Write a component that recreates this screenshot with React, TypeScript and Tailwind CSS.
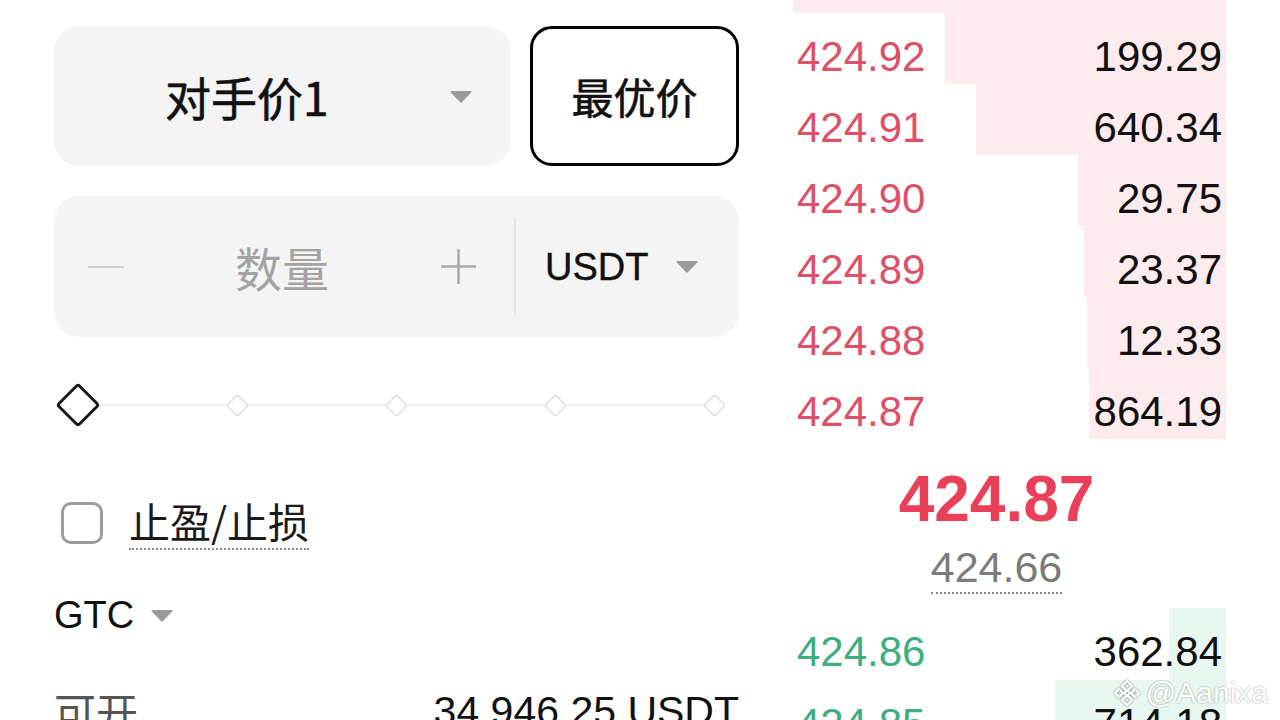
import React from "react";

const latin = "font-['Liberation_Sans','Noto_Sans_CJK_SC',sans-serif]";
const cjk = "font-['Noto_Sans_CJK_SC','Liberation_Sans',sans-serif]";

const asks = [
  { price: "424.93", qty: "518.40", bar: 433 },
  { price: "424.92", qty: "199.29", bar: 281 },
  { price: "424.91", qty: "640.34", bar: 250 },
  { price: "424.90", qty: "29.75", bar: 148 },
  { price: "424.89", qty: "23.37", bar: 142 },
  { price: "424.88", qty: "12.33", bar: 139 },
  { price: "424.87", qty: "864.19", bar: 137 },
];

const bids = [
  { price: "424.86", qty: "362.84", bar: 57 },
  { price: "424.85", qty: "714.18", bar: 171 },
];

const Caret = ({ className = "" }: { className?: string }) => (
  <svg width="22" height="13" viewBox="0 0 22 13" className={`shrink-0 ${className}`}>
    <path d="M1.5 1h19a1 1 0 0 1 .8 1.6l-9.5 9.6a1 1 0 0 1-1.6 0L.7 2.6A1 1 0 0 1 1.5 1z" fill="#9a9a9a" />
  </svg>
);

const BookRow = ({
  price,
  qty,
  bar,
  side,
  h,
}: {
  price: string;
  qty: string;
  bar: number;
  side: "ask" | "bid";
  h: string;
}) => (
  <div className={`relative flex shrink-0 ${h} items-center justify-between px-[4px] pt-[16px]`}>
    <div
      className={`absolute inset-y-0 right-0 ${side === "ask" ? "bg-[#fdebee]" : "bg-[#e9f7f1]"}`}
      style={{ width: bar }}
    />
    <span
      className={`relative text-[42px] leading-[42px] ${side === "ask" ? "text-[#dc5068]" : "text-[#3eae7e]"}`}
    >
      {price}
    </span>
    <span className="relative text-[42px] leading-[42px] text-[#111]">{qty}</span>
  </div>
);

export default function App() {
  return (
    <div className={`relative flex h-[720px] w-[1280px] items-start overflow-hidden bg-white ${latin}`}>
      {/* order form */}
      <div className="flex w-[739px] shrink-0 flex-col pl-[54px] pt-[26px]">
        <div className="flex h-[140px] shrink-0 gap-[19px]">
          <div className="flex w-[457px] items-center rounded-[25px] bg-[#f4f4f4]">
            <span
              className={`pl-[111px] text-[46px] font-normal leading-[46px] text-[#111] [-webkit-text-stroke:0.6px_#111] ${cjk}`}
            >
              对手价1
            </span>
            <Caret className="ml-auto mr-[39px]" />
          </div>
          <div className="flex flex-1 items-center justify-center rounded-[22px] border-[3px] border-black">
            <span className={`text-[42px] font-normal leading-[42px] text-[#111] [-webkit-text-stroke:0.6px_#111] ${cjk}`}>
              最优价
            </span>
          </div>
        </div>

        <div className="mt-[30px] flex h-[141px] shrink-0 items-center rounded-[25px] bg-[#f4f4f4]">
          <div className="ml-[34px] h-[2px] w-[36px] shrink-0 bg-[#d2d2d2]" />
          <span className={`w-[316px] shrink-0 text-center text-[47px] leading-[48px] text-[#a3a3a3] ${cjk}`}>
            数量
          </span>
          <svg width="37" height="37" viewBox="0 0 37 37" className="shrink-0">
            <path d="M18.5 1v35M1 18.5h35" stroke="#a8a8a8" strokeWidth="2.5" />
          </svg>
          <div className="ml-[37px] h-[98px] w-[2px] shrink-0 bg-[#e7e7e7]" />
          <span className="ml-[29px] text-[38px] leading-[38px] text-[#111] [-webkit-text-stroke:0.4px_#111]">USDT</span>
          <Caret className="ml-[28px]" />
        </div>

        <div className="relative mt-[45px] flex h-[46px] w-[684px] shrink-0 items-center justify-between">
          <div className="absolute left-[24px] right-[24px] top-[22px] h-[2px] bg-[#efefef]" />
          <div className="relative flex w-[48px] justify-center">
            <div className="h-[32px] w-[32px] rotate-45 rounded-[4px] border-[3px] border-[#1a1a1a] bg-white" />
          </div>
          {[0, 1, 2, 3].map((i) => (
            <div key={i} className="relative flex w-[48px] justify-center">
              <div className="h-[17px] w-[17px] rotate-45 rounded-[3px] border-2 border-[#e6e6e6] bg-white" />
            </div>
          ))}
        </div>

        <div className="mt-[74px] flex shrink-0 items-start">
          <div className="ml-[7px] h-[42px] w-[42px] shrink-0 rounded-[10px] border-[3px] border-[#9c9c9c]" />
          <span
            className={`ml-[26px] mt-[-4px] border-b-2 border-dotted border-[#8a8a8a] pb-[6px] text-[41px] leading-[44px] text-[#1a1a1a] ${cjk}`}
          >
            止盈/止损
          </span>
        </div>

        <div className="mt-[46px] flex shrink-0 items-center">
          <span className="text-[38px] leading-[38px] text-[#111]">GTC</span>
          <Caret className="ml-[17px]" />
        </div>

        <div className="mt-[56px] flex shrink-0 items-start justify-between">
          <span className={`text-[42px] leading-[42px] text-[#555] ${cjk}`}>可开</span>
          <span className="text-[41px] leading-[42px] text-[#111]">34,946.25 USDT</span>
        </div>
      </div>

      {/* order book */}
      <div className="ml-[54px] mt-[-58px] flex w-[433px] shrink-0 flex-col">
        {asks.map((r) => (
          <BookRow key={r.price} {...r} side="ask" h="h-[71px]" />
        ))}
        <div className="flex h-[169px] shrink-0 flex-col items-center pr-[26px] pt-[28px]">
          <span className="text-[64px] font-bold leading-[64px] text-[#ea3f58]">424.87</span>
          <span className="mt-[15px] border-b-2 border-dotted border-[#8a8a8a] pb-[3px] text-[43px] leading-[43px] text-[#7b7b7b]">
            424.66
          </span>
        </div>
        {bids.map((r) => (
          <BookRow key={r.price} {...r} side="bid" h="h-[72px]" />
        ))}
      </div>

      {/* watermark */}
      <div className="absolute bottom-[12px] right-[12px] flex items-center gap-[4px] text-white [text-shadow:0_0_2px_rgba(0,0,0,0.45)]">
        <svg width="30" height="30" viewBox="0 0 30 30" className="drop-shadow-[0_0_1px_rgba(0,0,0,0.5)]">
          <g fill="none" stroke="#fff" strokeWidth="2">
            <path d="M15 3l5 5-5 5-5-5z" />
            <path d="M7 11l4 4-4 4-4-4z" />
            <path d="M23 11l4 4-4 4-4-4z" />
            <path d="M15 17l5 5-5 5-5-5z" />
            <path d="M15 12l3 3-3 3-3-3z" />
          </g>
        </svg>
        <span className="text-[30px] font-light leading-[30px]">@Aanixa</span>
      </div>
    </div>
  );
}
